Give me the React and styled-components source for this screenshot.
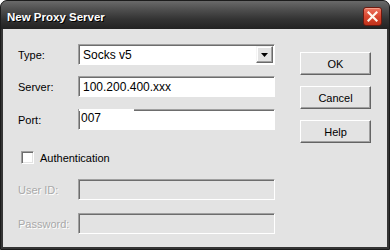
import React from "react";
import styled, { createGlobalStyle } from "styled-components";

const Global = createGlobalStyle`
  html, body { margin: 0; padding: 0; background: #ffffff; }
  * { box-sizing: border-box; }
`;

const Window = styled.div`
  width: 390px;
  height: 250px;
  display: flex;
  flex-direction: column;
  background: #353535;
  border: 1px solid #1c1c1c;
  border-radius: 7px 7px 0 0;
  overflow: hidden;
  font-family: "Liberation Sans", Arial, sans-serif;
`;

const TitleBar = styled.div`
  height: 28px;
  flex: none;
  display: flex;
  align-items: center;
  justify-content: space-between;
  padding: 3px 7px 0 6px;
  background: linear-gradient(#6a6a6a 0%, #4f4f4f 30%, #333333 65%, #222222 100%);
`;

const Title = styled.div`
  color: #ffffff;
  font-weight: bold;
  font-size: 11.5px;
  letter-spacing: 0px;
  text-shadow: 1px 1px 0 #000000;
`;

const CloseButton = styled.div`
  width: 19px;
  height: 19px;
  border-radius: 3px;
  border: 1px solid #6e1a10;
  background: linear-gradient(#ee7560 0%, #d9472f 50%, #c2321b 100%);
  display: flex;
  align-items: center;
  justify-content: center;
  box-shadow: inset 0 1px 0 rgba(255, 200, 180, 0.5);
`;

const Body = styled.div`
  flex: 1;
  margin: 0 2px 2px 2px;
  background: #e3e3e3;
  display: flex;
  align-items: flex-start;
  padding: 15px 16px 0 15px;
`;

const Form = styled.div`
  display: flex;
  flex-direction: column;
`;

const Row = styled.div`
  display: flex;
  align-items: center;
  height: 21px;
  margin-top: ${(p) => p.$top || 0}px;
`;

const Label = styled.div`
  width: 60px;
  font-size: 11px;
  color: ${(p) => (p.$disabled ? "#a9a9a9" : "#000000")};
  text-shadow: ${(p) => (p.$disabled ? "1px 1px 0 #ffffff" : "none")};
`;

const Field = styled.div`
  position: relative;
  width: 197px;
  height: 21px;
  border-top: 1px solid #a0a0a0;
  border-left: 1px solid #a0a0a0;
  border-bottom: 1px solid #ffffff;
  border-right: 1px solid #ffffff;
  box-shadow: inset 1px 1px 0 #6d6d6d;
  background: ${(p) => (p.$disabled ? "#e3e3e3" : "#ffffff")};
  display: flex;
  align-items: ${(p) => (p.$raw ? "flex-start" : "center")};
  padding: ${(p) => (p.$raw ? "1px 0 0 2px" : "0 0 0 4px")};
  font-size: 12px;
  line-height: 14px;
  color: #000000;

  ${(p) =>
    p.$raw &&
    `
    &::before {
      content: "";
      position: absolute;
      left: 0;
      top: -1px;
      width: 55px;
      height: 2px;
      background: #ffffff;
    }
  `}
`;

const SelectText = styled.div`
  flex: 1;
`;

const DropButton = styled.div`
  width: 17px;
  height: 17px;
  margin-right: 1px;
  background: #e3e3e3;
  border-top: 1px solid #f4f4f4;
  border-left: 1px solid #f4f4f4;
  border-right: 1px solid #6a6a6a;
  border-bottom: 1px solid #6a6a6a;
  box-shadow: inset -1px -1px 0 #a0a0a0, inset 1px 1px 0 #ffffff;
  display: flex;
  align-items: center;
  justify-content: center;
`;

const CheckRow = styled.div`
  display: flex;
  align-items: center;
  height: 13px;
  margin-top: 21px;
  margin-left: 3px;
  font-size: 11px;
  color: #000000;
  gap: 6px;
`;

const CheckBox = styled.div`
  width: 13px;
  height: 13px;
  background: #ffffff;
  border-top: 1px solid #a0a0a0;
  border-left: 1px solid #a0a0a0;
  border-bottom: 1px solid #ffffff;
  border-right: 1px solid #ffffff;
  box-shadow: inset 1px 1px 0 #6d6d6d, inset -1px -1px 0 #e3e3e3;
`;

const Buttons = styled.div`
  margin-left: 25px;
  margin-top: 8px;
  display: flex;
  flex-direction: column;
  gap: 11px;
`;

const Button = styled.div`
  width: 71px;
  height: 23px;
  background: #e3e3e3;
  border-top: 1px solid #ffffff;
  border-left: 1px solid #ffffff;
  border-right: 1px solid #646464;
  border-bottom: 1px solid #646464;
  box-shadow: inset -1px -1px 0 #a0a0a0;
  display: flex;
  align-items: center;
  justify-content: center;
  font-size: 11px;
  color: #000000;
`;

export default function App() {
  return (
    <>
      <Global />
      <Window>
        <TitleBar>
          <Title>New Proxy Server</Title>
          <CloseButton>
            <svg width="11" height="11" viewBox="0 0 11 11">
              <path d="M1.5 1.5 L9.5 9.5 M9.5 1.5 L1.5 9.5" stroke="#fff6ec" strokeWidth="2.2" strokeLinecap="square" />
            </svg>
          </CloseButton>
        </TitleBar>
        <Body>
          <Form>
            <Row>
              <Label>Type:</Label>
              <Field>
                <SelectText>Socks v5</SelectText>
                <DropButton>
                  <svg width="7" height="4" viewBox="0 0 7 4">
                    <polygon points="0,0 7,0 3.5,4" fill="#000" />
                  </svg>
                </DropButton>
              </Field>
            </Row>
            <Row $top={11}>
              <Label>Server:</Label>
              <Field>100.200.400.xxx</Field>
            </Row>
            <Row $top={12}>
              <Label>Port:</Label>
              <Field $raw>007</Field>
            </Row>
            <CheckRow>
              <CheckBox />
              Authentication
            </CheckRow>
            <Row $top={15}>
              <Label $disabled>User ID:</Label>
              <Field $disabled />
            </Row>
            <Row $top={13}>
              <Label $disabled>Password:</Label>
              <Field $disabled />
            </Row>
          </Form>
          <Buttons>
            <Button>OK</Button>
            <Button>Cancel</Button>
            <Button>Help</Button>
          </Buttons>
        </Body>
      </Window>
    </>
  );
}
